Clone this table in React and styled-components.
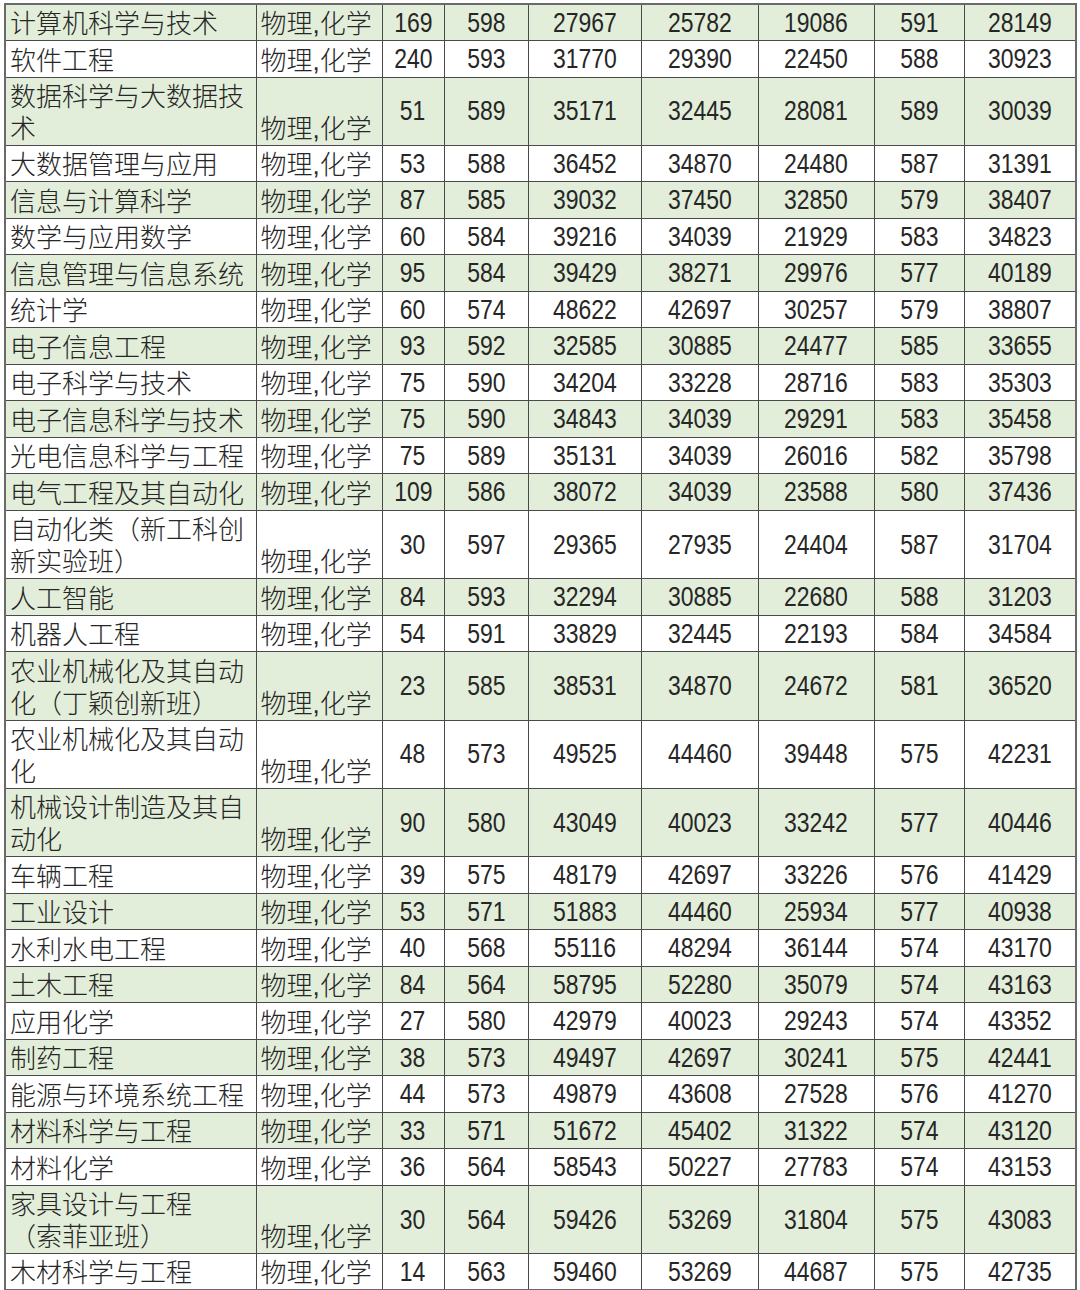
import React from "react";
import styled, { createGlobalStyle } from "styled-components";

const GlobalStyle = createGlobalStyle`
  html, body { margin: 0; padding: 0; background: #ffffff; }
  body { font-family: "Liberation Sans", "Noto Sans CJK SC", sans-serif; }
`;

const Page = styled.div`
  padding: 3px 0 0 4px;
  width: 1080px;
  box-sizing: border-box;
`;

const Table = styled.table`
  border-collapse: collapse;
  table-layout: fixed;
  width: 1071px;
  border: 2px solid #6a6a6a;
  color: #262626;
`;

const Row = styled.tr`
  height: ${(p) => (p.$double ? "68.4px" : "36.5px")};
  background: ${(p) => (p.$alt ? "#e2eed9" : "#ffffff")};
`;

const baseCell = `
  border: 1px solid #4a4a4a;
  box-sizing: border-box;
  font-family: "Liberation Sans", "Noto Sans CJK SC", sans-serif;
  overflow: hidden;
`;

const NameCell = styled.td`
  ${baseCell}
  padding: 0 0 0 4px;
  font-size: 26px;
  font-weight: 300;
  line-height: 32px;
  white-space: pre-line;
  vertical-align: bottom;
  text-align: left;
`;

const SubjectCell = styled.td`
  ${baseCell}
  padding: 0 0 0 4px;
  font-size: 26px;
  font-weight: 300;
  line-height: 32px;
  white-space: nowrap;
  vertical-align: bottom;
  text-align: left;
`;

const NumCell = styled.td`
  ${baseCell}
  padding: 0;
  font-size: 28px;
  line-height: 30px;
  vertical-align: middle;
  text-align: center;
  white-space: nowrap;
`;

const Narrow = styled.span`
  display: inline-block;
  transform: scaleX(0.82);
  transform-origin: center;
`;

const widths = [251, 126, 62, 84, 113, 117, 116, 90, 112];

const rows = [
  ["计算机科学与技术", 169, 598, 27967, 25782, 19086, 591, 28149],
  ["软件工程", 240, 593, 31770, 29390, 22450, 588, 30923],
  ["数据科学与大数据技\n术", 51, 589, 35171, 32445, 28081, 589, 30039],
  ["大数据管理与应用", 53, 588, 36452, 34870, 24480, 587, 31391],
  ["信息与计算科学", 87, 585, 39032, 37450, 32850, 579, 38407],
  ["数学与应用数学", 60, 584, 39216, 34039, 21929, 583, 34823],
  ["信息管理与信息系统", 95, 584, 39429, 38271, 29976, 577, 40189],
  ["统计学", 60, 574, 48622, 42697, 30257, 579, 38807],
  ["电子信息工程", 93, 592, 32585, 30885, 24477, 585, 33655],
  ["电子科学与技术", 75, 590, 34204, 33228, 28716, 583, 35303],
  ["电子信息科学与技术", 75, 590, 34843, 34039, 29291, 583, 35458],
  ["光电信息科学与工程", 75, 589, 35131, 34039, 26016, 582, 35798],
  ["电气工程及其自动化", 109, 586, 38072, 34039, 23588, 580, 37436],
  ["自动化类（新工科创\n新实验班）", 30, 597, 29365, 27935, 24404, 587, 31704],
  ["人工智能", 84, 593, 32294, 30885, 22680, 588, 31203],
  ["机器人工程", 54, 591, 33829, 32445, 22193, 584, 34584],
  ["农业机械化及其自动\n化（丁颖创新班）", 23, 585, 38531, 34870, 24672, 581, 36520],
  ["农业机械化及其自动\n化", 48, 573, 49525, 44460, 39448, 575, 42231],
  ["机械设计制造及其自\n动化", 90, 580, 43049, 40023, 33242, 577, 40446],
  ["车辆工程", 39, 575, 48179, 42697, 33226, 576, 41429],
  ["工业设计", 53, 571, 51883, 44460, 25934, 577, 40938],
  ["水利水电工程", 40, 568, 55116, 48294, 36144, 574, 43170],
  ["土木工程", 84, 564, 58795, 52280, 35079, 574, 43163],
  ["应用化学", 27, 580, 42979, 40023, 29243, 574, 43352],
  ["制药工程", 38, 573, 49497, 42697, 30241, 575, 42441],
  ["能源与环境系统工程", 44, 573, 49879, 43608, 27528, 576, 41270],
  ["材料科学与工程", 33, 571, 51672, 45402, 31322, 574, 43120],
  ["材料化学", 36, 564, 58543, 50227, 27783, 574, 43153],
  ["家具设计与工程\n（索菲亚班）", 30, 564, 59426, 53269, 31804, 575, 43083],
  ["木材科学与工程", 14, 563, 59460, 53269, 44687, 575, 42735],
];

export default function App() {
  return (
    <>
      <GlobalStyle />
      <Page>
        <Table>
          <colgroup>
            {widths.map((w, i) => (
              <col key={i} style={{ width: w }} />
            ))}
          </colgroup>
          <tbody>
            {rows.map((r, i) => {
              const [name, ...nums] = r;
              return (
                <Row key={i} $alt={i % 2 === 0} $double={name.includes("\n")}>
                  <NameCell>{name}</NameCell>
                  <SubjectCell>物理,化学</SubjectCell>
                  {nums.map((n, j) => (
                    <NumCell key={j}>
                      <Narrow>{n}</Narrow>
                    </NumCell>
                  ))}
                </Row>
              );
            })}
          </tbody>
        </Table>
      </Page>
    </>
  );
}
